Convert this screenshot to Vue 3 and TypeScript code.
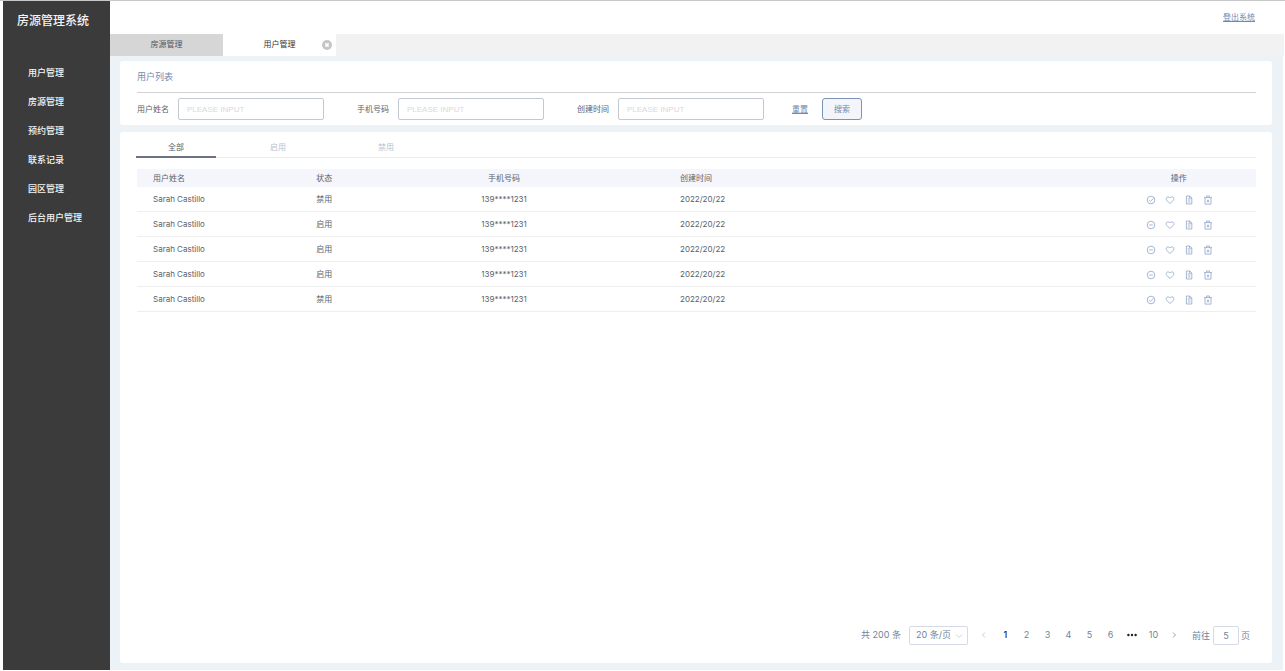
<script setup lang="ts">
import { ref } from 'vue'

interface User {
  name: string
  enabled: boolean
  phone: string
  created: string
}

const menu = ['用户管理', '房源管理', '预约管理', '联系记录', '园区管理', '后台用户管理']
const filters = [
  { id: 'name', label: '用户姓名' },
  { id: 'phone', label: '手机号码' },
  { id: 'created', label: '创建时间' },
]
const values = ref<Record<string, string>>({ name: '', phone: '', created: '' })
const states = ['全部', '启用', '禁用']
const activeState = ref('全部')
const users: User[] = [false, true, true, true, false].map((enabled) => ({
  name: 'Sarah Castillo',
  enabled,
  phone: '139****1231',
  created: '2022/20/22',
}))
const pages = [1, 2, 3, 4, 5, 6]
const page = ref(1)
const jump = ref('5')

function reset() {
  values.value = { name: '', phone: '', created: '' }
}
</script>

<template>
  <div class="app">
    <aside class="sidebar">
      <h1>房源管理系统</h1>
      <nav>
        <a v-for="item in menu" :key="item" href="#">{{ item }}</a>
      </nav>
    </aside>

    <div class="main">
      <header class="topbar"><a href="#">登出系统</a></header>

      <div class="page-tabs">
        <div class="page-tab">
          <button type="button" class="tab-name">房源管理</button>
        </div>
        <div class="page-tab current">
          <button type="button" class="tab-name">用户管理</button>
          <button type="button" class="close" aria-label="关闭">
            <svg viewBox="0 0 10 10"><circle cx="5" cy="5" r="5" fill="#c6c6c6" /><path d="M3.4 3.4l3.2 3.2M6.6 3.4L3.4 6.6" stroke="#fff" stroke-width="1.5" /></svg>
          </button>
        </div>
      </div>

      <main class="content">
        <section class="card search">
          <h2>用户列表</h2>
          <form @submit.prevent>
            <div v-for="f in filters" :key="f.id" class="field">
              <label :for="f.id">{{ f.label }}</label>
              <input :id="f.id" v-model="values[f.id]" type="text" placeholder="PLEASE INPUT" />
            </div>
            <a class="reset" href="#" @click.prevent="reset">重置</a>
            <button type="submit" class="submit">搜索</button>
          </form>
        </section>

        <section class="card list">
          <div class="state-tabs">
            <button
              v-for="s in states"
              :key="s"
              type="button"
              :class="{ active: s === activeState }"
              @click="activeState = s"
            >{{ s }}</button>
          </div>

          <table>
            <thead>
              <tr>
                <th class="c-name">用户姓名</th>
                <th class="c-state">状态</th>
                <th class="c-phone">手机号码</th>
                <th class="c-date">创建时间</th>
                <th class="c-ops">操作</th>
              </tr>
            </thead>
            <tbody>
              <tr v-for="(u, i) in users" :key="i">
                <td>{{ u.name }}</td>
                <td>{{ u.enabled ? '启用' : '禁用' }}</td>
                <td class="c-phone">{{ u.phone }}</td>
                <td>{{ u.created }}</td>
                <td class="c-ops">
                  <div class="ops">
                    <button type="button" :aria-label="u.enabled ? '禁用' : '启用'">
                      <svg viewBox="0 0 10 10">
                        <circle cx="5" cy="5" r="3.8" />
                        <path v-if="u.enabled" d="M3.2 5h3.6" />
                        <path v-else d="M3.2 5.1l1.3 1.3 3-3.2" />
                      </svg>
                    </button>
                    <button type="button" aria-label="收藏">
                      <svg viewBox="0 0 10 10"><path d="M5 8.6L1.8 5.4C.9 4.4 1 2.9 2 2.2c1-.6 2.3-.3 3 .8.7-1.1 2-1.4 3-.8 1 .7 1.1 2.2.2 3.2z" /></svg>
                    </button>
                    <button type="button" aria-label="详情">
                      <svg viewBox="0 0 10 10"><path d="M2.4 1h3.4l2 2v6H2.4zM5.6 1v2.3h2M3.8 3.4h1M3.8 5h2.6M3.8 7h2.6" /></svg>
                    </button>
                    <button type="button" aria-label="删除">
                      <svg viewBox="0 0 10 10"><path d="M1 2.6h8M3.5 2.4V1h3v1.4M2 2.8v6.3h6V2.8M4.4 4.8v2.5M5.6 4.8v2.5" /></svg>
                    </button>
                  </div>
                </td>
              </tr>
            </tbody>
          </table>

          <div class="pagination">
            <span>共 200 条</span>
            <div class="size">
              <select aria-label="每页条数"><option>20 条/页</option></select>
              <svg viewBox="0 0 8 8"><path d="M1 2.5l3 3 3-3" /></svg>
            </div>
            <div class="pager">
              <button type="button" class="prev" aria-label="上一页">
                <svg viewBox="0 0 8 8"><path d="M5 1.5L2.5 4 5 6.5" /></svg>
              </button>
              <button
                v-for="p in pages"
                :key="p"
                type="button"
                :class="{ on: p === page }"
                @click="page = p"
              >{{ p }}</button>
              <button type="button" class="more" aria-label="更多">
                <svg viewBox="0 0 10 4"><circle cx="1.4" cy="2" r="1.2" /><circle cx="5" cy="2" r="1.2" /><circle cx="8.6" cy="2" r="1.2" /></svg>
              </button>
              <button type="button">10</button>
              <button type="button" class="next" aria-label="下一页">
                <svg viewBox="0 0 8 8"><path d="M3 1.5L5.5 4 3 6.5" /></svg>
              </button>
            </div>
            <label class="jump">前往<input v-model="jump" type="text" />页</label>
          </div>
        </section>
      </main>
    </div>
  </div>
</template>

<style>
body {
  margin: 0;
  background: #fff;
}
</style>

<style scoped>
* {
  box-sizing: border-box;
}
.app {
  display: flex;
  min-height: 100vh;
  padding: 0 1px 1px 3px;
  border-top: 1px solid #c8c8c8;
  font: 8px/12px Inter, "Noto Sans CJK SC", sans-serif;
  color: #5a626c;
}
button,
input,
select {
  margin: 0;
  padding: 0;
  border: 0;
  background: none;
  font: inherit;
  color: inherit;
}
button {
  cursor: pointer;
}
svg {
  display: block;
  fill: none;
}
.sidebar {
  flex: none;
  width: 107px;
  background: #3b3b3b;
  color: #f4f4f4;
}
h1 {
  margin: 0;
  padding: 11px 0 0 14px;
  font-size: 12px;
  line-height: 18px;
  font-weight: 500;
}
nav {
  display: flex;
  flex-direction: column;
  padding: 28px 0 0 25px;
}
nav a {
  font-size: 9px;
  line-height: 29px;
  font-weight: 500;
  color: inherit;
  text-decoration: none;
}
.main {
  flex: 1;
  min-width: 0;
  display: flex;
  flex-direction: column;
}
.topbar {
  display: flex;
  justify-content: flex-end;
  padding: 10px 29px 11px 0;
}
.topbar a,
.reset {
  color: #7189af;
}
.page-tabs {
  display: flex;
  height: 22px;
  background: #f2f2f2;
}
.page-tab {
  position: relative;
  width: 113px;
  background: #d6d6d6;
  color: #555;
}
.current {
  background: #fff;
  color: #333;
}
.tab-name {
  width: 100%;
  height: 100%;
  padding-bottom: 2px;
}
.close {
  position: absolute;
  top: 6px;
  right: 4px;
}
.close svg {
  width: 10px;
  height: 10px;
}
.content {
  flex: 1;
  display: flex;
  flex-direction: column;
  gap: 7px;
  margin-right: 1px;
  padding: 5px 11px 7px 10px;
  background: #ecf2f6;
}
.card {
  background: #fff;
  border-radius: 3px;
}
.search {
  padding: 1px 16px 5px 17px;
}
h2 {
  margin: 0;
  font-size: 9px;
  line-height: 30px;
  font-weight: 400;
  color: #7189af;
  border-bottom: 1px solid #d2d2d2;
}
form {
  display: flex;
  align-items: center;
  padding-top: 5px;
}
.field {
  display: flex;
  align-items: center;
  gap: 9px;
  margin-right: 33px;
}
.field label {
  padding-bottom: 1px;
}
.field input {
  width: 146px;
  height: 22px;
  padding: 0 8px;
  border: 1px solid #c3c8d1;
  border-radius: 2px;
  font-family: "Liberation Sans", "Noto Sans CJK SC", sans-serif;
}
.field input::placeholder {
  color: #d9d9d9;
  opacity: 1;
}
.field:nth-child(3) {
  margin-right: 28px;
}
.submit {
  width: 40px;
  height: 22px;
  margin-left: 14px;
  padding-bottom: 1px;
  border: 1px solid #7b93b8;
  border-radius: 3px;
  background: #f3f5fa;
  color: #7189af;
}
.list {
  flex: 1;
  display: flex;
  flex-direction: column;
  padding: 3px 16px 18px;
}
.state-tabs {
  display: flex;
  border-bottom: 1px solid #ebecee;
}
.state-tabs button {
  width: 108px;
  height: 23px;
  margin-bottom: -1px;
  padding-top: 2px;
  border-bottom: 2px solid transparent;
  color: #b6c2cd;
}
.state-tabs button:first-child {
  width: 80px;
  margin-right: 8px;
}
.state-tabs .active {
  color: #5a626c;
  border-color: #6b7383;
}
table {
  width: calc(100% - 1px);
  margin: 11px 0 auto 1px;
  border-collapse: separate;
  border-spacing: 0;
  table-layout: fixed;
}
th,
td {
  padding: 0 0 1px 16px;
  font-weight: 400;
  text-align: left;
}
th {
  height: 18px;
  background: #f4f6fb;
}
td {
  height: 25px;
  border-bottom: 1px solid #eeeeef;
}
.c-name {
  width: 14.6%;
}
.c-state {
  width: 3.9%;
}
.c-phone {
  width: 28.6%;
  padding-left: 0;
  text-align: center;
}
.c-date {
  width: 39.1%;
}
.c-ops {
  padding-left: 0;
  text-align: center;
}
.ops {
  display: flex;
  justify-content: center;
  gap: 9px;
  padding: 3px 0 0 2px;
}
.ops svg {
  width: 10px;
  height: 10px;
  stroke: #8fa4c6;
  stroke-width: 0.8;
}
.pagination {
  display: flex;
  align-items: center;
  justify-content: flex-end;
  padding-right: 6px;
  font-size: 9px;
  color: #71839d;
}
.pagination > span,
.pager {
  padding-bottom: 1px;
}
.size {
  position: relative;
  margin: 0 6px 0 8px;
}
.size select {
  display: block;
  appearance: none;
  width: 59px;
  height: 19px;
  padding: 0 0 1px 6px;
  border: 1px solid #d5dbe6;
  border-radius: 2px;
}
.size svg {
  position: absolute;
  top: 6px;
  right: 5px;
  width: 8px;
  height: 8px;
  stroke: #bfc8d6;
  stroke-width: 0.8;
  pointer-events: none;
}
.pager {
  display: flex;
}
.pager button {
  display: flex;
  align-items: center;
  justify-content: center;
  width: 21px;
  height: 18px;
}
.pager .on {
  color: #222c44;
  font-weight: 500;
}
.pager svg {
  width: 8px;
  height: 8px;
  stroke: #8c8c8c;
  stroke-width: 0.8;
}
.pager .prev svg {
  stroke: #b8c0cc;
}
.pager .more {
  width: 22px;
}
.pager .more svg {
  width: 10px;
  height: 4px;
  fill: #222;
  stroke: none;
}
.jump {
  display: flex;
  align-items: center;
  margin-left: 7px;
}
.jump input {
  width: 26px;
  height: 19px;
  margin: 0 2px 0 3px;
  padding-bottom: 1px;
  border: 1px solid #d5dbe6;
  border-radius: 2px;
  text-align: center;
}
</style>
